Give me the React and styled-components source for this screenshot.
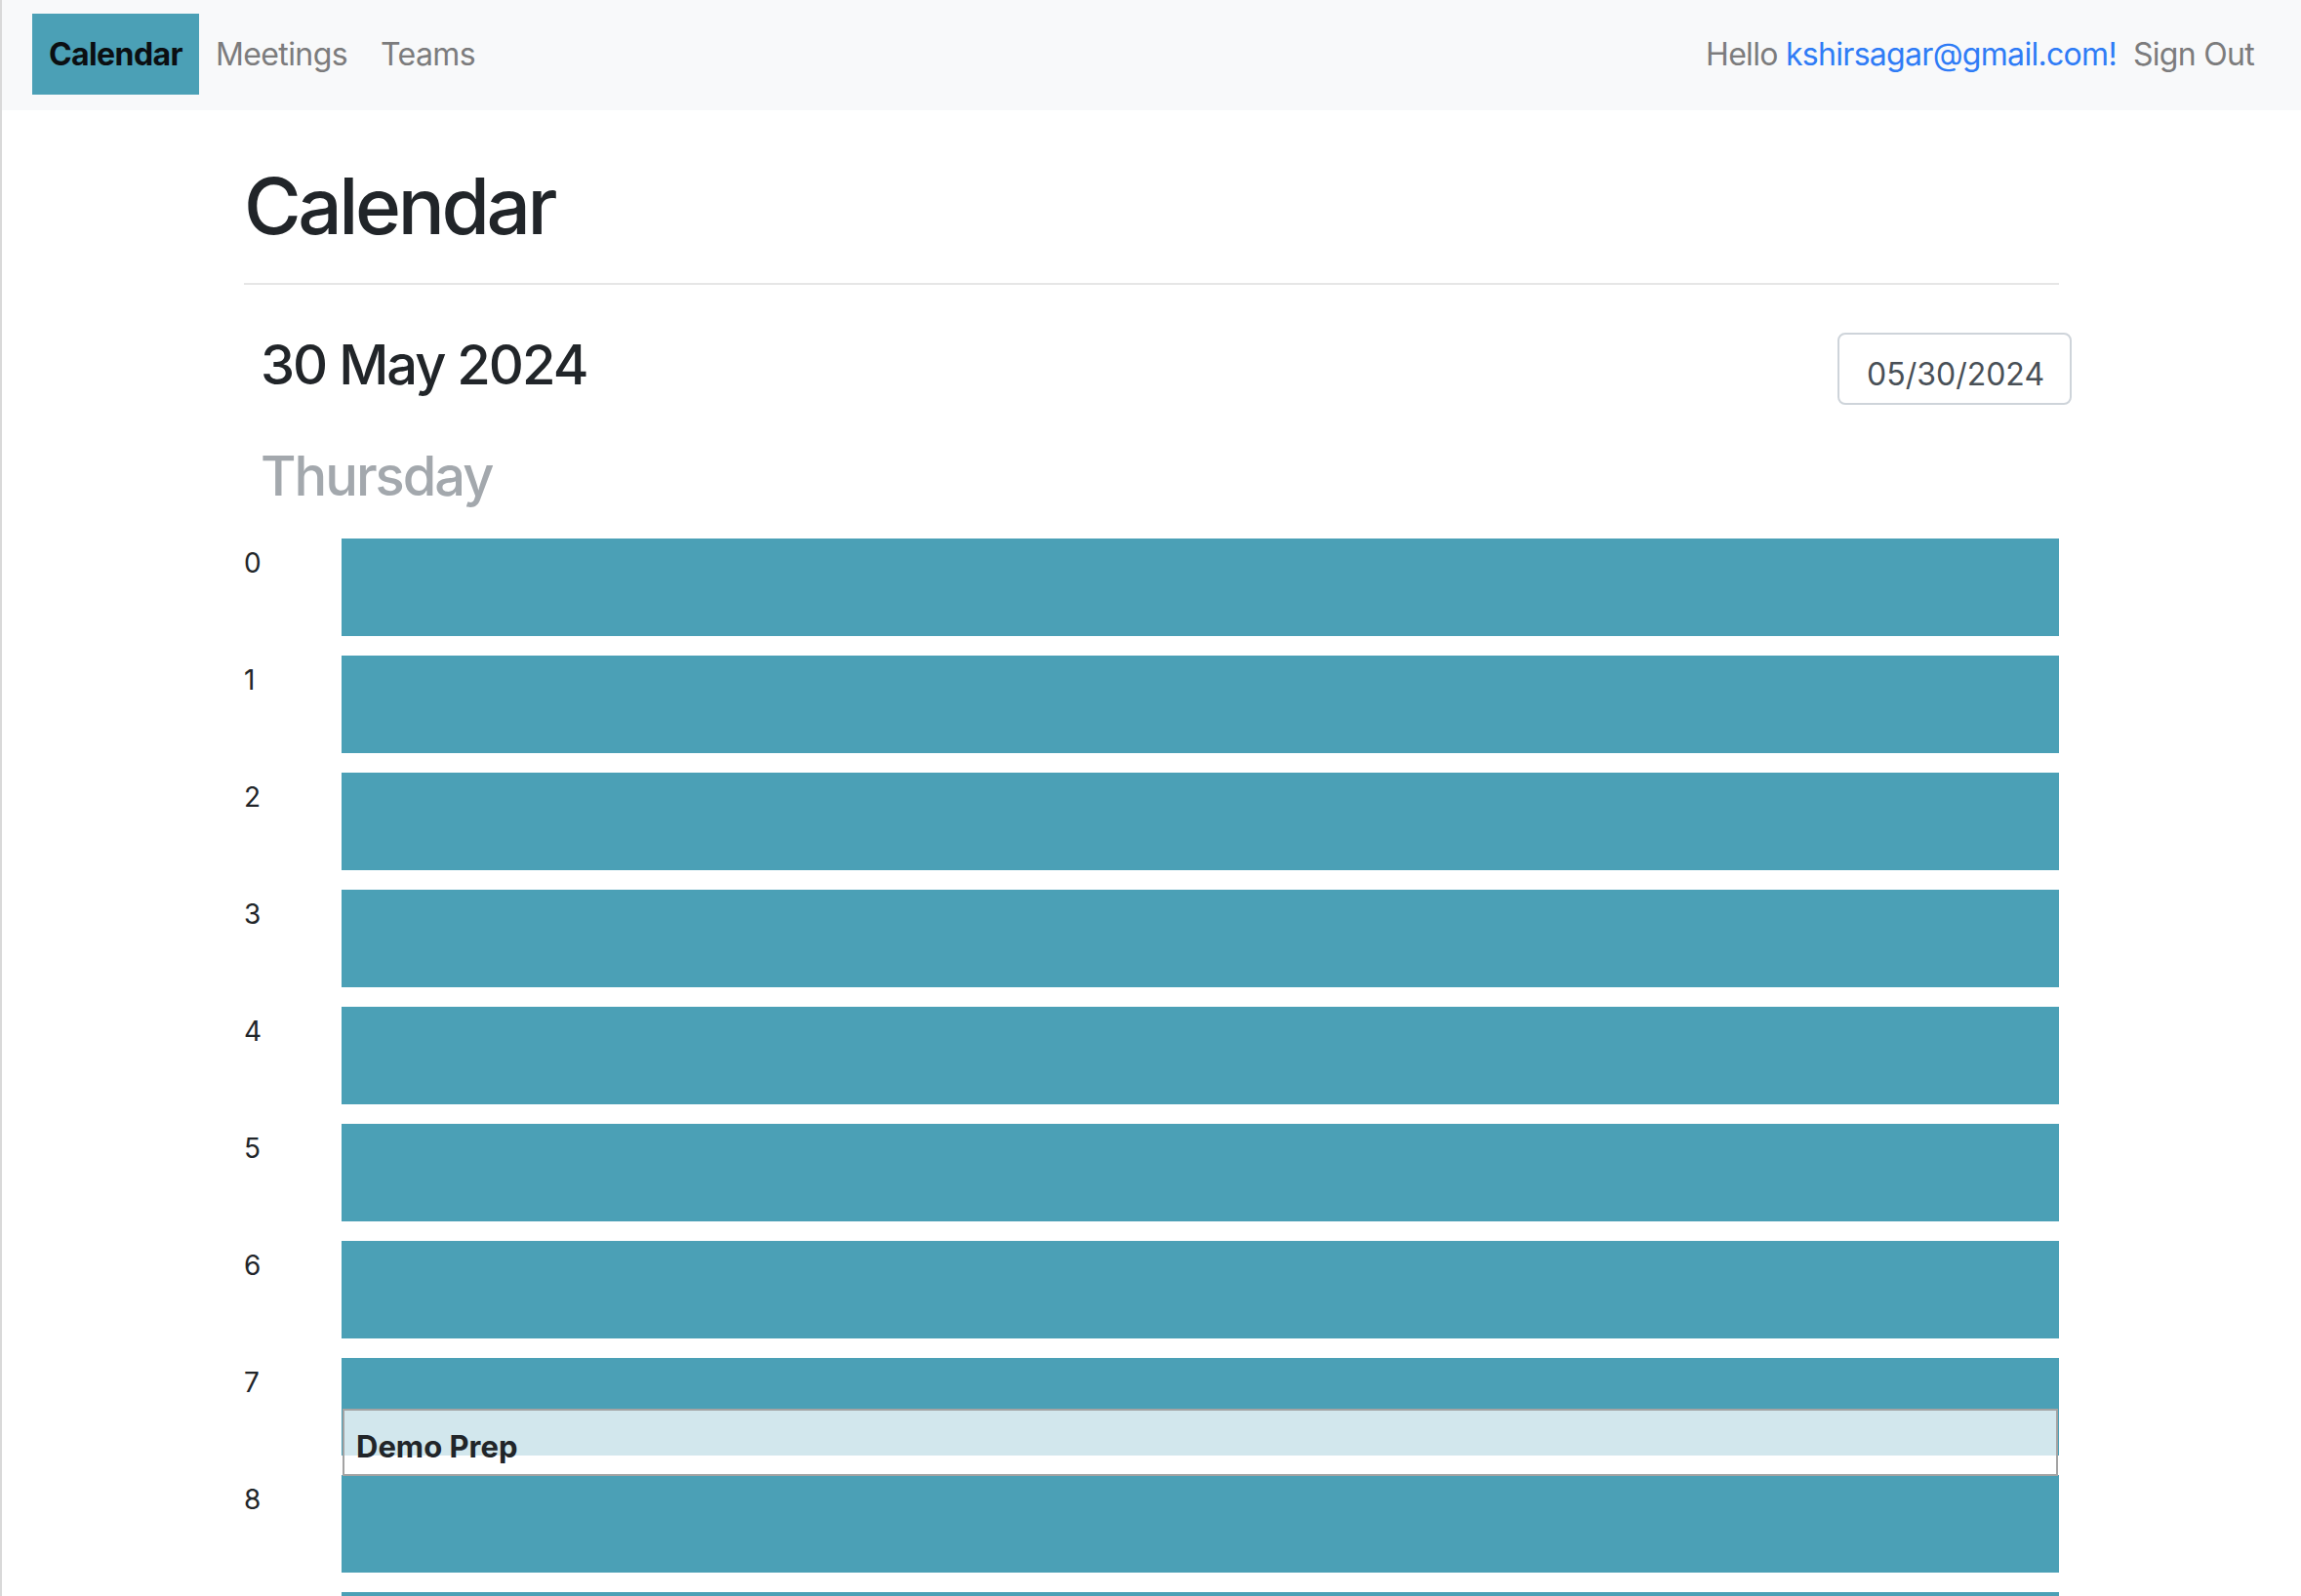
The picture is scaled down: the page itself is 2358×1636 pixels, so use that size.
import React from "react";
import styled, { createGlobalStyle } from "styled-components";

const GlobalStyle = createGlobalStyle`
  html, body {
    margin: 0;
    padding: 0;
    background: #ffffff;
  }
  body {
    font-family: Inter, "Noto Sans", "Liberation Sans", sans-serif;
    color: #212529;
  }
  * { box-sizing: border-box; }
`;

const TEAL = "#4ba0b6";

const Page = styled.div`
  min-height: 100vh;
  border-left: 2px solid #d9d9d9;
`;

const NavBar = styled.nav`
  display: flex;
  align-items: center;
  justify-content: space-between;
  height: 113px;
  padding: 14px 48px 16px 31px;
  background: #f8f9fa;
`;

const NavGroup = styled.div`
  display: flex;
  align-items: center;
  height: 83px;
`;

const NavLink = styled.a`
  display: flex;
  align-items: center;
  height: 83px;
  padding: 0 17px;
  font-size: 32px;
  line-height: 48px;
  letter-spacing: -0.6px;
  font-weight: ${(p) => (p.$active ? 700 : 400)};
  color: ${(p) => (p.$active ? "#0b0f12" : "#7c7c7d")};
  background: ${(p) => (p.$active ? TEAL : "transparent")};
  text-decoration: none;
  cursor: pointer;
`;

const Greeting = styled.span`
  font-size: 32px;
  line-height: 48px;
  letter-spacing: -0.7px;
  color: #7c7c7d;
  white-space: pre;
`;

const Email = styled.a`
  color: #2f7cf6;
  text-decoration: none;
`;

const SignOut = styled(NavLink)`
  padding: 0 0 0 17px;
  letter-spacing: -0.7px;
`;

const Container = styled.main`
  width: 1860px;
  margin: 0 auto;
`;

const PageHeader = styled.header`
  padding: 50px 0 31px;
  border-bottom: 2px solid #e6e6e6;
`;

const Title = styled.h1`
  margin: 0;
  font-size: 80px;
  line-height: 96px;
  font-weight: 500;
  letter-spacing: -3.4px;
  color: #212529;
`;

const DateRow = styled.div`
  display: flex;
  align-items: flex-start;
  justify-content: space-between;
  margin-top: 48px;
  margin-right: -13px;
  padding-left: 17px;
`;

const DateTitle = styled.h3`
  margin: 0;
  font-size: 56px;
  line-height: 68px;
  font-weight: 500;
  letter-spacing: -2px;
  color: #212529;
`;

const DateInput = styled.input`
  width: 240px;
  height: 74px;
  margin-top: 1px;
  padding: 10px 0 0 28px;
  border: 2px solid #ced4da;
  border-radius: 8px;
  background: #fff;
  font-family: Inter, "Noto Sans", "Liberation Sans", sans-serif;
  font-size: 32px;
  color: #495057;
  outline: none;
`;

const DayName = styled.h3`
  margin: 39px 0 0;
  padding-left: 17px;
  font-size: 56px;
  line-height: 68px;
  font-weight: 500;
  letter-spacing: -2px;
  color: #a3a8ad;
`;

const Schedule = styled.section`
  margin-top: 30px;
  display: flex;
  flex-direction: column;
  gap: 20px;
`;

const HourRow = styled.div`
  display: grid;
  grid-template-columns: 100px 1fr;
  height: 100px;
`;

const HourLabel = styled.div`
  padding-top: 4px;
  font-size: 28px;
  line-height: 42px;
  color: #212529;
`;

const HourSlot = styled.div`
  position: relative;
  background: ${TEAL};
`;

const EventBox = styled.div`
  position: absolute;
  left: 1px;
  right: 1px;
  top: ${(p) => p.$top}px;
  height: ${(p) => p.$height}px;
  z-index: 1;
  padding: 19px 0 0 12px;
  border: 2px solid #a3a3a3;
  background: rgba(255, 255, 255, 0.75);
  font-size: 31px;
  line-height: 36px;
  font-weight: 700;
  color: #212529;
`;

const events = [{ hour: 7, title: "Demo Prep", top: 52, height: 69 }];

export default function App() {
  const hours = Array.from({ length: 24 }, (_, i) => i);
  return (
    <>
      <GlobalStyle />
      <Page>
        <NavBar>
          <NavGroup>
            <NavLink $active>Calendar</NavLink>
            <NavLink>Meetings</NavLink>
            <NavLink>Teams</NavLink>
          </NavGroup>
          <NavGroup>
            <Greeting>
              Hello <Email>kshirsagar@gmail.com!</Email>
            </Greeting>
            <SignOut>Sign Out</SignOut>
          </NavGroup>
        </NavBar>
        <Container>
          <PageHeader>
            <Title>Calendar</Title>
          </PageHeader>
          <DateRow>
            <DateTitle>30 May 2024</DateTitle>
            <DateInput type="text" value="05/30/2024" readOnly />
          </DateRow>
          <DayName>Thursday</DayName>
          <Schedule>
            {hours.map((h) => (
              <HourRow key={h}>
                <HourLabel>{h}</HourLabel>
                <HourSlot>
                  {events
                    .filter((e) => e.hour === h)
                    .map((e) => (
                      <EventBox key={e.title} $top={e.top} $height={e.height}>
                        {e.title}
                      </EventBox>
                    ))}
                </HourSlot>
              </HourRow>
            ))}
          </Schedule>
        </Container>
      </Page>
    </>
  );
}
